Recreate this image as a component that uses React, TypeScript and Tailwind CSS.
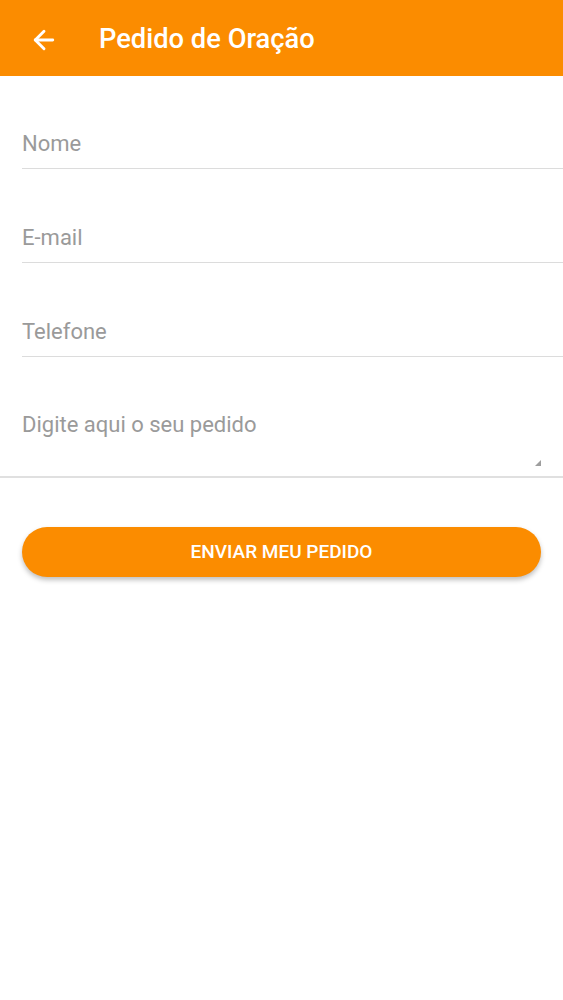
import { ArrowLeft } from 'lucide-react';

const fields = ['Nome', 'E-mail', 'Telefone'];

export default function App() {
  return (
    <div className="min-h-[1000px] bg-white font-['Roboto',sans-serif]">
      <header className="flex h-[76px] items-center bg-[#fb8c00] pl-[29px] pt-[3px] text-white">
        <ArrowLeft size={30} strokeWidth={2.3} />
        <h1 className="ml-[40px] text-[27.3px] font-medium">Pedido de Oração</h1>
      </header>

      <form className="flex flex-col">
        {fields.map((f) => (
          <div key={f} className="flex h-[94px] flex-col justify-end pl-[22px] first:h-[93px]">
            <input
              placeholder={f}
              className="h-[50px] w-full border-b border-[#dcdcdc] pb-[1px] text-[22px] text-[#424242] outline-none placeholder:text-[#9a9a9a]"
            />
          </div>
        ))}

        <div className="relative h-[121px] border-b-2 border-[#e0e0e0]">
          <textarea
            placeholder="Digite aqui o seu pedido"
            className="h-full w-full resize-none pl-[22px] pt-[51px] text-[22px] text-[#424242] outline-none placeholder:text-[#9a9a9a]"
          />
          <svg className="absolute bottom-[10px] right-[22px]" width="6" height="6" viewBox="0 0 6 6">
            <path d="M6 0 L6 6 L0 6 Z" fill="#9e9e9e" />
          </svg>
        </div>

        <div className="px-[22px] pt-[49px]">
          <button
            type="button"
            className="h-[50px] w-full rounded-full bg-[#fb8c00] text-[19px] font-medium text-white shadow-[0_3px_5px_rgba(0,0,0,0.25)]"
          >
            ENVIAR MEU PEDIDO
          </button>
        </div>
      </form>
    </div>
  );
}
